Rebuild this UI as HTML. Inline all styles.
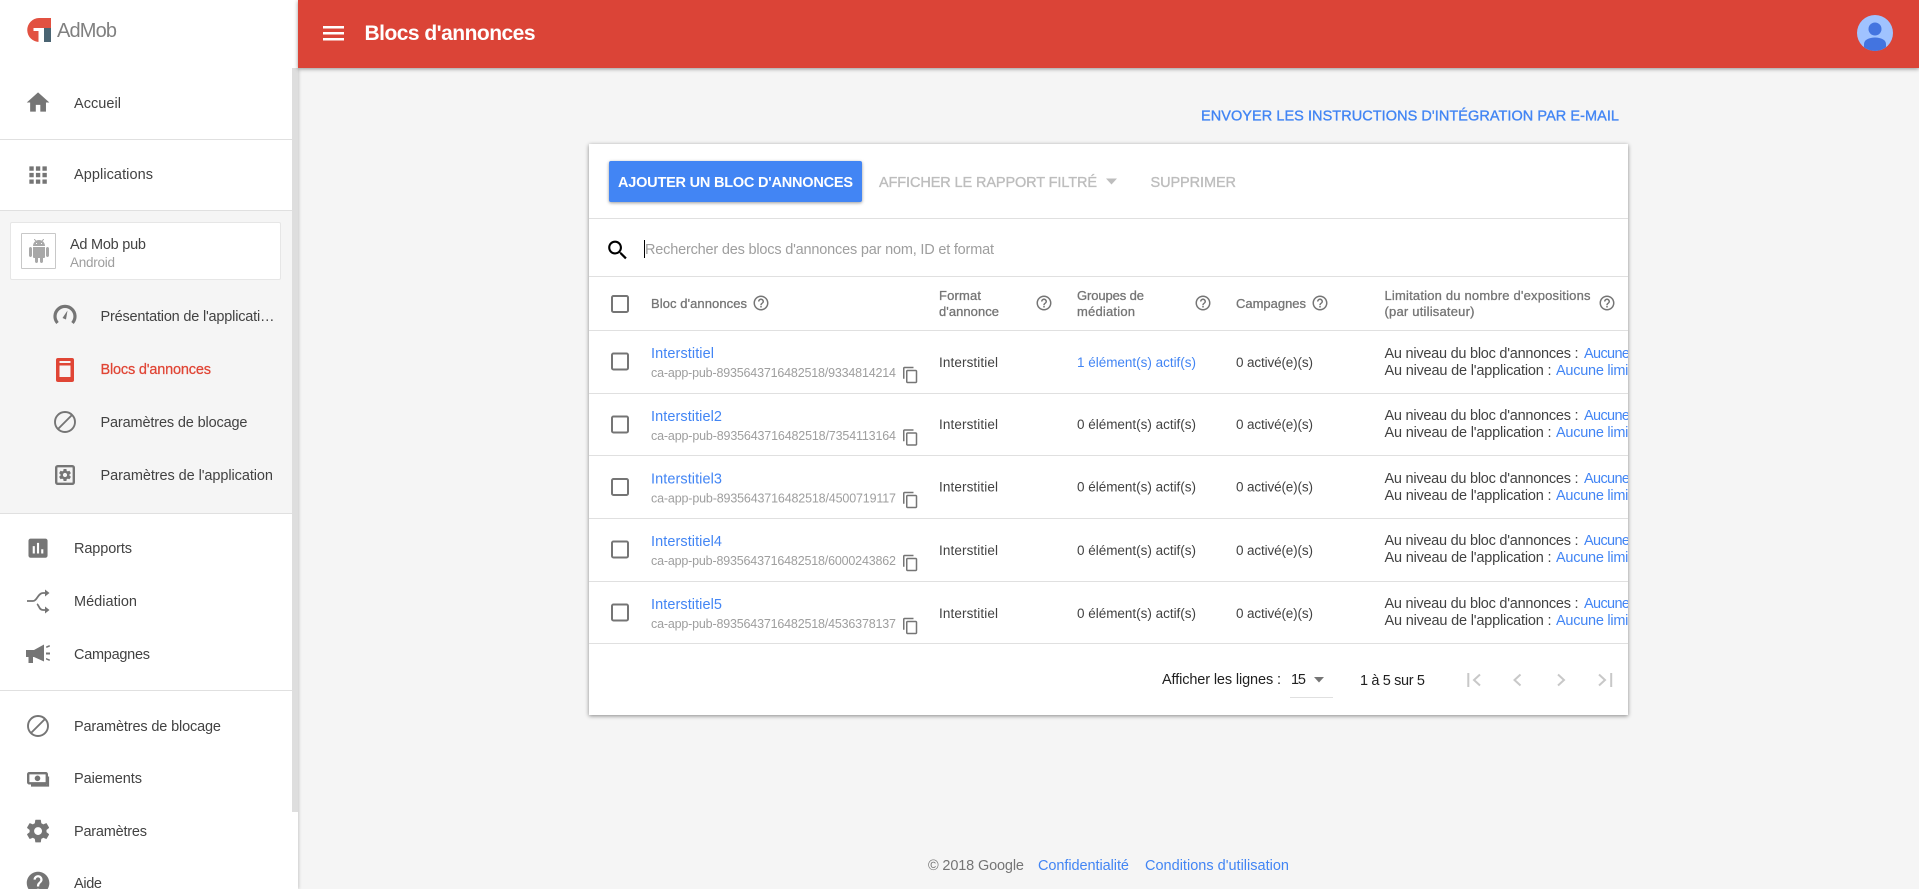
<!DOCTYPE html>
<html lang="fr"><head><meta charset="utf-8"><title>Blocs d'annonces</title>
<style>
html,body{margin:0;padding:0;width:1919px;height:889px;overflow:hidden;background:#f5f5f5;font-family:"Liberation Sans",sans-serif}
.b{position:absolute}
svg{position:absolute;left:0;top:0}
text{font-family:"Liberation Sans",sans-serif;white-space:pre}
.n{font-size:14.5px;fill:#424242}
.m{font-size:14.5px;fill:#bdbdbd;stroke:#bdbdbd;stroke-width:.35px}
.h{font-size:13px;fill:#757575;stroke:#757575;stroke-width:.3px}
.c{font-size:13.5px;fill:#424242}
.i{fill:#757575}
</style></head><body>
<div class="b" style="left:0;top:0;width:298px;height:889px;background:#fff;box-shadow:1px 0 3px rgba(0,0,0,.18)"></div>
<div class="b" style="left:0;top:211px;width:292px;height:302px;background:#f5f5f5"></div>
<div class="b" style="left:292px;top:68px;width:6px;height:744px;background:#dedede"></div>
<div class="b" style="left:0;top:139px;width:292px;height:1px;background:#e0e0e0"></div>
<div class="b" style="left:0;top:210px;width:292px;height:1px;background:#e0e0e0"></div>
<div class="b" style="left:0;top:513px;width:292px;height:1px;background:#e0e0e0"></div>
<div class="b" style="left:0;top:690px;width:292px;height:1px;background:#e0e0e0"></div>
<div class="b" style="left:10px;top:222px;width:269px;height:56px;background:#fff;border:1px solid #e6e6e6;border-radius:2px"></div>
<div class="b" style="left:21px;top:233px;width:33px;height:34px;background:#fff;border:1px solid #c8c8c8;border-radius:1px"></div>
<div class="b" style="left:298px;top:0;width:1621px;height:68px;background:#db4437;box-shadow:0 1px 4px rgba(0,0,0,.4)"></div>
<div class="b" style="left:589px;top:144px;width:1039px;height:571px;background:#fff;box-shadow:0 1px 4px rgba(0,0,0,.45)"></div>
<div class="b" style="left:589px;top:218px;width:1039px;height:1px;background:#e0e0e0"></div>
<div class="b" style="left:589px;top:276px;width:1039px;height:1px;background:#e0e0e0"></div>
<div class="b" style="left:589px;top:330px;width:1039px;height:1px;background:#e0e0e0"></div>
<div class="b" style="left:589px;top:393px;width:1039px;height:1px;background:#e0e0e0"></div>
<div class="b" style="left:589px;top:455px;width:1039px;height:1px;background:#e0e0e0"></div>
<div class="b" style="left:589px;top:518px;width:1039px;height:1px;background:#e0e0e0"></div>
<div class="b" style="left:589px;top:581px;width:1039px;height:1px;background:#e0e0e0"></div>
<div class="b" style="left:589px;top:643px;width:1039px;height:1px;background:#e0e0e0"></div>
<div class="b" style="left:609px;top:161px;width:253px;height:41px;background:#4285f4;border-radius:2px;box-shadow:0 1px 3px rgba(0,0,0,.4)"></div>
<div class="b" style="left:1290px;top:697px;width:43px;height:1px;background:#e0e0e0"></div>

<svg width="1919" height="889" viewBox="0 0 1919 889" xmlns="http://www.w3.org/2000/svg">
<defs>
<clipPath id="cl"><rect x="1380" y="330" width="248" height="320"/></clipPath>
<clipPath id="av"><circle cx="1875" cy="33" r="18"/></clipPath>
<path id="help" d="M11 18h2v-2h-2v2zm1-16C6.48 2 2 6.48 2 12s4.48 10 10 10 10-4.48 10-10S17.52 2 12 2zm0 18c-4.41 0-8-3.59-8-8s3.59-8 8-8 8 3.59 8 8-3.59 8-8 8zm0-14c-2.21 0-4 1.79-4 4h2c0-1.1.9-2 2-2s2 .9 2 2c0 2-3 1.75-3 5h2c0-2.25 3-2.5 3-5 0-2.21-1.79-4-4-4z"/>
<path id="copy" d="M16 1H4c-1.1 0-2 .9-2 2v14h2V3h12V1zm3 4H8c-1.1 0-2 .9-2 2v14c0 1.1.9 2 2 2h11c1.1 0 2-.9 2-2V7c0-1.1-.9-2-2-2zm0 16H8V7h11v14z"/>
<path id="gear" d="M19.43 12.98c.04-.32.07-.64.07-.98s-.03-.66-.07-.98l2.11-1.65c.19-.15.24-.42.12-.64l-2-3.46c-.12-.22-.39-.3-.61-.22l-2.49 1c-.52-.4-1.08-.73-1.69-.98l-.38-2.65C14.46 2.18 14.25 2 14 2h-4c-.25 0-.46.18-.49.42l-.38 2.65c-.61.25-1.17.59-1.69.98l-2.49-1c-.23-.09-.49 0-.61.22l-2 3.46c-.13.22-.07.49.12.64l2.11 1.65c-.04.32-.07.65-.07.98s.03.66.07.98l-2.11 1.65c-.19.15-.24.42-.12.64l2 3.46c.12.22.39.3.61.22l2.49-1c.52.4 1.08.73 1.69.98l.38 2.65c.03.24.24.42.49.42h4c.25 0 .46-.18.49-.42l.38-2.65c.61-.25 1.17-.59 1.69-.98l2.49 1c.23.09.49 0 .61-.22l2-3.46c.12-.22.07-.49-.12-.64l-2.11-1.65zM12 15.5c-1.93 0-3.5-1.57-3.5-3.5s1.57-3.5 3.5-3.5 3.5 1.57 3.5 3.5-1.57 3.5-3.5 3.5z"/>
</defs>

<!-- logo -->
<path d="M39 18h12v10H44v14h-4.500A12 12 0 0 1 39 18z" fill="#e25141"/>
<rect x="38.500" y="28" width="5.500" height="15" fill="#fff"/>
<rect x="33.500" y="28" width="5.500" height="3" fill="#fff"/>
<rect x="44" y="28" width="7" height="14" fill="#4a6472"/>
<text x="57" y="37" font-size="20" fill="#808080" textLength="60">AdMob</text>

<!-- header -->
<rect x="323" y="26" width="21" height="2.500" fill="#fff"/>
<rect x="323" y="32" width="21" height="2.500" fill="#fff"/>
<rect x="323" y="38" width="21" height="2.500" fill="#fff"/>
<text x="364.500" y="40" font-size="21" font-weight="bold" fill="#fff" textLength="171">Blocs d'annonces</text>
<circle cx="1875" cy="33" r="18" fill="#a0c3ff"/>
<g clip-path="url(#av)"><circle cx="1875" cy="29" r="6.500" fill="#4374e0"/><path d="M1864 52v-8c0-4 5-6.500 11-6.500s11 2.500 11 6.500v8z" fill="#4374e0"/></g>

<!-- sidebar icons -->
<path class="i" transform="translate(24.500,89) scale(1.13)" d="M10 20v-6h4v6h5v-8h3L12 3 2 12h3v8z"/>
<path class="i" transform="translate(25,162) scale(1.09)" d="M4 8h4V4H4v4zm6 12h4v-4h-4v4zm-6 0h4v-4H4v4zm0-6h4v-4H4v4zm6 0h4v-4h-4v4zm6-10v4h4V4h-4zm-6 4h4V4h-4v4zm6 6h4v-4h-4v4zm0 6h4v-4h-4v4z"/>
<path fill="#a8a8a8" transform="translate(27,239)" d="M6 18c0 .55.45 1 1 1h1v3.500c0 .83.67 1.500 1.500 1.500s1.500-.67 1.500-1.500V19h2v3.500c0 .83.67 1.500 1.500 1.500s1.500-.67 1.500-1.500V19h1c.55 0 1-.45 1-1V8H6v10zM3.500 8C2.670 8 2 8.670 2 9.500v7c0 .83.67 1.500 1.500 1.500S5 17.330 5 16.500v-7C5 8.670 4.330 8 3.500 8zm17 0c-.83 0-1.500.67-1.500 1.500v7c0 .83.67 1.500 1.500 1.500s1.500-.67 1.500-1.500v-7c0-.83-.67-1.500-1.500-1.500zm-4.970-5.840l1.300-1.300c.2-.2.2-.51 0-.71-.2-.2-.51-.2-.71 0l-1.480 1.480C13.850 1.230 12.950 1 12 1c-.96 0-1.860.23-2.660.63L7.850.15c-.2-.2-.51-.2-.71 0-.2.2-.2.51 0 .71l1.310 1.310C6.970 3.260 6 5.010 6 7h12c0-1.990-.97-3.750-2.470-4.840zM10 5H9V4h1v1zm5 0h-1V4h1v1z"/>
<path d="M57.500 323a10 10 0 1 1 15 0" fill="none" stroke="#757575" stroke-width="3.200"/>
<path d="M62.500 318l5-7.500 -1.500 9z" fill="#757575"/>
<rect x="56" y="358" width="18" height="24" rx="2" fill="#e04535"/>
<rect x="59.500" y="361" width="11" height="16" fill="#f7f3f3"/>
<rect x="59.500" y="363" width="11" height="2.500" fill="#e04535"/>
<circle cx="65" cy="422" r="10" fill="none" stroke="#757575" stroke-width="1.900"/>
<path d="M58 429l14-14" stroke="#757575" stroke-width="1.900"/>
<rect x="56.200" y="466.200" width="17.600" height="17.600" rx="1.500" fill="none" stroke="#757575" stroke-width="2.400"/>
<use href="#gear" fill="#757575" transform="translate(57.800,467.800) scale(.6)"/>
<path class="i" transform="translate(25.300,535.500) scale(1.06)" d="M19 3H5c-1.100 0-2 .9-2 2v14c0 1.100.9 2 2 2h14c1.100 0 2-.9 2-2V5c0-1.100-.9-2-2-2zM9 17H7v-7h2v7zm4 0h-2V7h2v10zm4 0h-2v-4h2v4z"/>
<path d="M27 601h6c4 0 5-8 10-8h3M37 604c2 1 2 6 6 6h3" fill="none" stroke="#757575" stroke-width="1.800"/>
<path class="i" d="M45 589.500l4.500 3.500 -4.500 3.500zM45 606.500l4.500 3.500 -4.500 3.500z"/>
<path class="i" d="M26 650h8l10-5.500v17l-10-4.500h-1v6h-4.500v-6h-2.500z"/>
<path class="i" d="M46 646.500l3.500-1.500 .5 1.500 -3.500 1.500zM46 652.500h4v2h-4zM46 658l4 1.500 -.5 1.500 -3.500-1.500z"/>
<circle cx="38" cy="726" r="10" fill="none" stroke="#757575" stroke-width="1.900"/>
<path d="M31 733l14-14" stroke="#757575" stroke-width="1.900"/>
<rect x="28.200" y="773.200" width="18.600" height="10.100" rx="1" fill="none" stroke="#757575" stroke-width="2.400"/>
<circle cx="37.500" cy="778.300" r="2.800" fill="#757575"/>
<path d="M48 776.500v9h-17" fill="none" stroke="#757575" stroke-width="2.200"/>
<use href="#gear" fill="#757575" transform="translate(24.500,817.500) scale(1.13)"/>
<path class="i" transform="translate(24.500,869.500) scale(1.13)" d="M12 2C6.480 2 2 6.480 2 12s4.480 10 10 10 10-4.480 10-10S17.520 2 12 2zm1 17h-2v-2h2v2zm2.070-7.750l-.9.92C13.450 12.900 13 13.500 13 15h-2v-.5c0-1.100.45-2.100 1.170-2.830l1.240-1.260c.37-.36.59-.86.59-1.410 0-1.100-.9-2-2-2s-2 .9-2 2H8c0-2.210 1.790-4 4-4s4 1.790 4 4c0 .88-.36 1.680-.93 2.250z"/>

<!-- sidebar text -->
<text class="n" x="74" y="108" textLength="47">Accueil</text>
<text class="n" x="74" y="179" textLength="79">Applications</text>
<text class="n" x="70" y="249" textLength="76">Ad Mob pub</text>
<text x="70" y="267" font-size="13.500" fill="#9e9e9e" textLength="45">Android</text>
<text class="n" x="100.500" y="321" textLength="174">Présentation de l'applicati…</text>
<text x="100.500" y="374" font-size="14.500" fill="#e04535" stroke="#e04535" stroke-width=".25" textLength="110.500">Blocs d'annonces</text>
<text class="n" x="100.500" y="427" textLength="147">Paramètres de blocage</text>
<text class="n" x="100.500" y="480" textLength="172.500">Paramètres de l'application</text>
<text class="n" x="74" y="553" textLength="58">Rapports</text>
<text class="n" x="74" y="606" textLength="63">Médiation</text>
<text class="n" x="74" y="659" textLength="76">Campagnes</text>
<text class="n" x="74" y="731" textLength="147">Paramètres de blocage</text>
<text class="n" x="74" y="783" textLength="68">Paiements</text>
<text class="n" x="74" y="836" textLength="73">Paramètres</text>
<text class="n" x="74" y="888" textLength="28">Aide</text>

<!-- top actions -->
<text class="m" style="fill:#4285f4;stroke:#4285f4" x="1201" y="120.500" textLength="418">ENVOYER LES INSTRUCTIONS D'INTÉGRATION PAR E-MAIL</text>
<text x="618" y="187" font-size="14.500" font-weight="bold" fill="#fff" textLength="235">AJOUTER UN BLOC D'ANNONCES</text>
<text class="m" x="879" y="187" textLength="218">AFFICHER LE RAPPORT FILTRÉ</text>
<path d="M1106 178.500h11l-5.500 6z" fill="#bdbdbd"/>
<text class="m" x="1150.500" y="187" textLength="85.500">SUPPRIMER</text>

<!-- search -->
<path fill="#000" transform="translate(605,237.500) scale(1.060)" d="M15.500 14h-.79l-.28-.27C15.410 12.590 16 11.110 16 9.500 16 5.910 13.090 3 9.500 3S3 5.910 3 9.500 5.910 16 9.500 16c1.610 0 3.090-.59 4.230-1.570l.27.28v.79l5 4.990L20.490 19l-4.990-5zm-6 0C7.010 14 5 11.990 5 9.500S7.010 5 9.500 5 14 7.010 14 9.500 11.990 14 9.500 14z"/>
<rect x="644" y="240" width="1" height="18" fill="#000"/>
<text x="645" y="254" font-size="14.500" fill="#9e9e9e" textLength="349">Rechercher des blocs d'annonces par nom, ID et format</text>

<!-- table head -->
<rect x="612" y="296" width="16" height="16" rx="1.500" fill="none" stroke="#757575" stroke-width="2"/>
<text class="h" x="651" y="308" textLength="96">Bloc d'annonces</text>
<use href="#help" fill="#757575" transform="translate(752,294) scale(.75)"/>
<text class="h" x="939" y="300" textLength="42">Format</text>
<text class="h" x="939" y="316" textLength="60">d'annonce</text>
<use href="#help" fill="#757575" transform="translate(1035,294) scale(.75)"/>
<text class="h" x="1077" y="300" textLength="67">Groupes de</text>
<text class="h" x="1077" y="316" textLength="58">médiation</text>
<use href="#help" fill="#757575" transform="translate(1194,294) scale(.75)"/>
<text class="h" x="1236" y="308" textLength="70">Campagnes</text>
<use href="#help" fill="#757575" transform="translate(1311,294) scale(.75)"/>
<text class="h" x="1384.500" y="300" textLength="206">Limitation du nombre d'expositions</text>
<text class="h" x="1384.500" y="316" textLength="90">(par utilisateur)</text>
<use href="#help" fill="#757575" transform="translate(1598,294) scale(.75)"/>

<!-- rows -->
<g>
<rect x="612" y="353.500" width="16" height="16" rx="1.500" fill="none" stroke="#757575" stroke-width="2"/>
<text class="n" style="fill:#4285f4" x="651" y="358" textLength="63">Interstitiel</text>
<text x="651" y="377" font-size="12.500" fill="#9e9e9e" textLength="245">ca-app-pub-8935643716482518/9334814214</text>
<use href="#copy" fill="#757575" transform="translate(901.500,366) scale(.75)"/>
<text class="c" x="939" y="367" textLength="59">Interstitiel</text>
<text class="c" style="fill:#4285f4" x="1077" y="367" textLength="119">1 élément(s) actif(s)</text>
<text class="c" x="1236" y="367" textLength="77">0 activé(e)(s)</text>
</g>
<g transform="translate(0,63)">
<rect x="612" y="353.500" width="16" height="16" rx="1.500" fill="none" stroke="#757575" stroke-width="2"/>
<text class="n" style="fill:#4285f4" x="651" y="358" textLength="71">Interstitiel2</text>
<text x="651" y="377" font-size="12.500" fill="#9e9e9e" textLength="245">ca-app-pub-8935643716482518/7354113164</text>
<use href="#copy" fill="#757575" transform="translate(901.500,365.500) scale(.75)"/>
<text class="c" x="939" y="366" textLength="59">Interstitiel</text>
<text class="c" x="1077" y="366" textLength="119">0 élément(s) actif(s)</text>
<text class="c" x="1236" y="366" textLength="77">0 activé(e)(s)</text>
</g>
<g transform="translate(0,125.500)">
<rect x="612" y="353.500" width="16" height="16" rx="1.500" fill="none" stroke="#757575" stroke-width="2"/>
<text class="n" style="fill:#4285f4" x="651" y="358" textLength="71">Interstitiel3</text>
<text x="651" y="377" font-size="12.500" fill="#9e9e9e" textLength="245">ca-app-pub-8935643716482518/4500719117</text>
<use href="#copy" fill="#757575" transform="translate(901.500,365.500) scale(.75)"/>
<text class="c" x="939" y="366" textLength="59">Interstitiel</text>
<text class="c" x="1077" y="366" textLength="119">0 élément(s) actif(s)</text>
<text class="c" x="1236" y="366" textLength="77">0 activé(e)(s)</text>
</g>
<g transform="translate(0,188)">
<rect x="612" y="353.500" width="16" height="16" rx="1.500" fill="none" stroke="#757575" stroke-width="2"/>
<text class="n" style="fill:#4285f4" x="651" y="358" textLength="71">Interstitiel4</text>
<text x="651" y="377" font-size="12.500" fill="#9e9e9e" textLength="245">ca-app-pub-8935643716482518/6000243862</text>
<use href="#copy" fill="#757575" transform="translate(901.500,366) scale(.75)"/>
<text class="c" x="939" y="367" textLength="59">Interstitiel</text>
<text class="c" x="1077" y="367" textLength="119">0 élément(s) actif(s)</text>
<text class="c" x="1236" y="367" textLength="77">0 activé(e)(s)</text>
</g>
<g transform="translate(0,251)">
<rect x="612" y="353.500" width="16" height="16" rx="1.500" fill="none" stroke="#757575" stroke-width="2"/>
<text class="n" style="fill:#4285f4" x="651" y="358" textLength="71">Interstitiel5</text>
<text x="651" y="377" font-size="12.500" fill="#9e9e9e" textLength="245">ca-app-pub-8935643716482518/4536378137</text>
<use href="#copy" fill="#757575" transform="translate(901.500,366) scale(.75)"/>
<text class="c" x="939" y="367" textLength="59">Interstitiel</text>
<text class="c" x="1077" y="367" textLength="119">0 élément(s) actif(s)</text>
<text class="c" x="1236" y="367" textLength="77">0 activé(e)(s)</text>
</g>
<g clip-path="url(#cl)">
<text class="n" x="1384.500" y="358" textLength="194">Au niveau du bloc d'annonces :</text>
<text class="n" style="fill:#4285f4" x="1584" y="358" textLength="46">Aucune</text>
<text class="n" x="1384.500" y="375" textLength="167">Au niveau de l'application :</text>
<text class="n" style="fill:#4285f4" x="1556" y="375" textLength="84">Aucune limite</text>
<text class="n" x="1384.500" y="420" textLength="194">Au niveau du bloc d'annonces :</text>
<text class="n" style="fill:#4285f4" x="1584" y="420" textLength="46">Aucune</text>
<text class="n" x="1384.500" y="437" textLength="167">Au niveau de l'application :</text>
<text class="n" style="fill:#4285f4" x="1556" y="437" textLength="84">Aucune limite</text>
<text class="n" x="1384.500" y="483" textLength="194">Au niveau du bloc d'annonces :</text>
<text class="n" style="fill:#4285f4" x="1584" y="483" textLength="46">Aucune</text>
<text class="n" x="1384.500" y="500" textLength="167">Au niveau de l'application :</text>
<text class="n" style="fill:#4285f4" x="1556" y="500" textLength="84">Aucune limite</text>
<text class="n" x="1384.500" y="545" textLength="194">Au niveau du bloc d'annonces :</text>
<text class="n" style="fill:#4285f4" x="1584" y="545" textLength="46">Aucune</text>
<text class="n" x="1384.500" y="562" textLength="167">Au niveau de l'application :</text>
<text class="n" style="fill:#4285f4" x="1556" y="562" textLength="84">Aucune limite</text>
<text class="n" x="1384.500" y="608" textLength="194">Au niveau du bloc d'annonces :</text>
<text class="n" style="fill:#4285f4" x="1584" y="608" textLength="46">Aucune</text>
<text class="n" x="1384.500" y="625" textLength="167">Au niveau de l'application :</text>
<text class="n" style="fill:#4285f4" x="1556" y="625" textLength="84">Aucune limite</text>
</g>

<!-- pagination -->
<text class="n" style="fill:#212121" x="1162" y="684" textLength="119">Afficher les lignes :</text>
<text class="n" style="fill:#212121" x="1291" y="684" textLength="15">15</text>
<path d="M1314 677h10l-5 5.500z" fill="#757575"/>
<text class="n" style="fill:#212121" x="1360" y="685" textLength="65">1 à 5 sur 5</text>
<g fill="none" stroke="#c8c8c8" stroke-width="2">
<path d="M1468.300 673v14M1480 674.500l-6 5.500 6 5.500"/>
<path d="M1520.500 674.500l-6 5.500 6 5.500"/>
<path d="M1558 674.500l6 5.500 -6 5.500"/>
<path d="M1599 674.500l6 5.500 -6 5.500M1611.200 673v14"/>
</g>

<!-- footer -->
<text class="n" style="fill:#757575" x="928" y="870" textLength="96">© 2018 Google</text>
<text class="n" style="fill:#4285f4" x="1038" y="870" textLength="91">Confidentialité</text>
<text class="n" style="fill:#4285f4" x="1145" y="870" textLength="144">Conditions d'utilisation</text>
</svg>
</body></html>
